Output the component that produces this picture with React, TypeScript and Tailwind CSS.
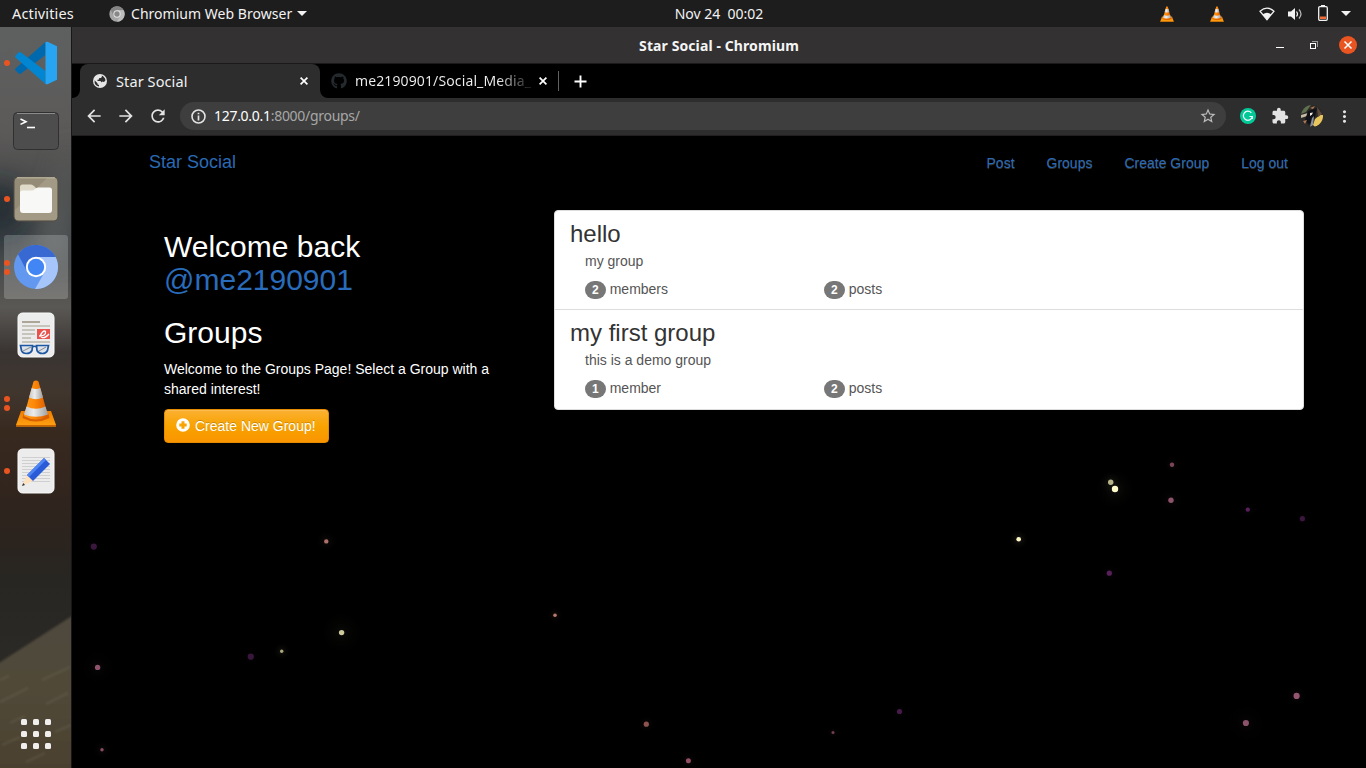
import { FaGithub } from "react-icons/fa";
import { MdExtension, MdArrowBack, MdArrowForward, MdRefresh, MdStarBorder, MdMoreVert } from "react-icons/md";
import type { ReactNode } from "react";

const UI = "font-['Noto_Sans','Open_Sans',sans-serif]";

function Cone({ w, h }: { w: number; h: number }) {
  return (
    <svg width={w} height={h} viewBox="0 0 42 47">
      <defs>
        <linearGradient id="coneO" x1="0" x2="1" y1="0" y2="0">
          <stop offset="0" stopColor="#ff9a1c" />
          <stop offset="0.4" stopColor="#ff8a0a" />
          <stop offset="1" stopColor="#d95a00" />
        </linearGradient>
        <linearGradient id="coneW" x1="0" x2="1" y1="0" y2="0">
          <stop offset="0" stopColor="#c4c4c4" />
          <stop offset="0.4" stopColor="#ececec" />
          <stop offset="1" stopColor="#a0a0a0" />
        </linearGradient>
        <linearGradient id="coneB" x1="0" x2="0" y1="0" y2="1">
          <stop offset="0" stopColor="#f07c00" />
          <stop offset="1" stopColor="#ffa313" />
        </linearGradient>
      </defs>
      <path d="M6 31H36L41 45Q41.500 46.500 40 46.500H2Q.5 46.500 1 45Z" fill="url(#coneB)" />
      <path d="M1 45H41V46.500H1Z" fill="#c96400" />
      <path d="M8.500 34Q21 41 33.500 34L34.500 38Q21 45 7.500 38Z" fill="#d75f00" />
      <path d="M18.500 1.500Q21 -.5 23.500 1.500L33 36Q21 43 9 36Z" fill="url(#coneO)" />
      <path d="M16.700 8Q21 10 25.300 8L28 17.500Q21 21 14 17.500Z" fill="url(#coneW)" />
      <path d="M11.500 26.500Q21 31 30.500 26.500L33 34.500Q21 39 9 34.500Z" fill="url(#coneW)" />
    </svg>
  );
}

function TopBar() {
  return (
    <header className={`flex h-[27px] shrink-0 items-center bg-[#1d1d1d] text-[14px] leading-[27px] text-[#f2f2f2] ${UI}`}>
      <div className="flex flex-1 items-center">
        <span className="ml-3 w-[97px] text-[14.5px] tracking-[0.15px]">Activities</span>
        <svg width="16" height="16" viewBox="0 0 48 48">
          <circle cx="24" cy="24" r="23" fill="#a5a5a5" />
          <path d="M24 13H44A23 23 0 0 0 5 11L14 29Z" fill="#858585" />
          <path d="M34 29L24 47A23 23 0 0 0 44 13H24Z" fill="#bcbcbc" />
          <circle cx="24" cy="24" r="11" fill="#e5e5e5" />
          <circle cx="24" cy="24" r="8" fill="#888" />
        </svg>
        <span className="ml-[6px] w-[162px] whitespace-nowrap tracking-[0.03px]">Chromium Web Browser</span>
        <svg className="ml-[4px]" width="10" height="5" viewBox="0 0 10 5"><path d="M0 0H10L5 5Z" fill="#f2f2f2" /></svg>
      </div>
      <span className="ml-[72px] -mt-px whitespace-pre tracking-[0px]">Nov 24  00:02</span>
      <div className="flex flex-1 items-center justify-end">
        <Cone w={14} h={16} />
        <span className="w-9" />
        <Cone w={14} h={16} />
        <svg className="ml-[35px]" width="16" height="14" viewBox="0 0 16 14">
          <path d="M1 4.200Q8-1.800 15 4.200L8 12.700Z" fill="none" stroke="#f2f2f2" strokeWidth="1.200" />
          <path d="M3.800 7.200Q8 4.200 12.200 7.200L8 12.700Z" fill="#f2f2f2" />
        </svg>
        <svg className="ml-[12px]" width="16" height="14" viewBox="0 0 16 14">
          <path d="M1 4.500H4L8 1V13L4 9.500H1Z" fill="#f2f2f2" />
          <path d="M9.500 4.500Q11.500 7 9.500 9.500" fill="none" stroke="#f2f2f2" strokeWidth="1.200" />
          <path d="M12 2.500Q16 7 12 11.500" fill="none" stroke="#bbb" strokeWidth="1.200" />
        </svg>
        <svg className="-mt-[2px] ml-[15px]" width="10" height="16" viewBox="0 0 10 16">
          <path d="M3 0H7V2H3Z" fill="#f2f2f2" />
          <rect x=".7" y="1.700" width="8.600" height="13.600" rx="1.200" fill="none" stroke="#f2f2f2" strokeWidth="1.300" />
          <path d="M2 11.500H8V14H2Z" fill="#f26a35" />
        </svg>
        <svg className="ml-[13px] mr-[15px]" width="10" height="5" viewBox="0 0 10 5"><path d="M0 0H10L5 5Z" fill="#f2f2f2" /></svg>
      </div>
    </header>
  );
}

function VsCode() {
  return (
    <svg width="44" height="44" viewBox="0 0 44 44">
      <path d="M31.500 1V14L7 32.500Q6 33.300 5 32.700L1.500 29.500Q.5 28.500 1.500 27.500Z" fill="#0069ad" />
      <path d="M31.500 43V30L7 11.500Q6 10.700 5 11.300L1.500 14.500Q.5 15.500 1.500 16.500Z" fill="#0286d1" />
      <path d="M31.500 1Q33 .6 34 1L43 5.200V38.800L34 43Q33 43.400 31.500 43Z" fill="#27a5f2" />
    </svg>
  );
}

function Terminal() {
  return (
    <svg width="46" height="38" viewBox="0 0 46 38">
      <rect x=".5" y=".5" width="45" height="37" rx="4" fill="#4d4d4d" stroke="#303030" />
      <path d="M4 1.500H42" stroke="#8b8b8b" />
      <path d="M7.500 7L13 9.700L7.500 12.400" fill="none" stroke="#fff" strokeWidth="1.600" />
      <path d="M14 15.500H22" stroke="#fff" strokeWidth="1.600" />
    </svg>
  );
}

function Files() {
  return (
    <svg width="46" height="46" viewBox="0 0 46 46">
      <rect x="1" y="1" width="44" height="44" rx="4.500" fill="#958c77" stroke="#544f45" />
      <path d="M2 34L34 2H41Q44 2 44 5V41Q44 44 41 44H5Q2 44 2 41Z" fill="#a39a85" />
      <path d="M4 1.800H42" stroke="#c8c0ac" />
      <path d="M7 16V11Q7 8.500 9.500 8.500H18Q19.500 8.500 21 10L23 12H35V20H7Z" fill="#dfdac9" />
      <path d="M7 17Q7 14.500 9.500 14.500H19Q20.500 14.500 22 13Q23.500 11.500 25 11.500H36.500Q39 11.500 39 14V34Q39 37 36 37H10Q7 37 7 34Z" fill="#f8f8f7" />
    </svg>
  );
}

function Chromium() {
  return (
    <svg width="44" height="44" viewBox="0 0 44 44">
      <circle cx="22" cy="22" r="22" fill="#6298ef" />
      <path d="M22 12H41.600A22 22 0 0 0 4 9.300L13.300 27Z" fill="#3869d3" />
      <path d="M41.600 12A22 22 0 0 1 21 44L30.700 27L31 17L22 12Z" fill="#a6c5fb" />
      <circle cx="22" cy="22" r="10.200" fill="#fff" />
      <circle cx="22" cy="22" r="8.200" fill="#4285f4" />
    </svg>
  );
}

function Reader() {
  return (
    <svg width="38" height="46" viewBox="0 0 38 46">
      <rect x="1" y="1" width="36" height="44" rx="4.500" fill="#ececec" stroke="#fafafa" />
      <g stroke="#bbb6ac" strokeWidth="1.700">
        <path d="M5 10H23" stroke="#a1998a" />
        <path d="M5 14H33M5 18H18M5 22H18M5 26H14M5 30H33" />
      </g>
      <rect x="20" y="17" width="13" height="10" fill="#e9534e" />
      <path d="M22 24Q29 24 28.500 20Q28 18 25.500 20Q22 24 25 25.500Q28 26.500 32 22" fill="none" stroke="#fff" strokeWidth="1.300" />
      <path d="M3.500 33.500H15.500L15 38.500Q13.500 41.500 9.500 41.500Q5.500 41.500 4.500 38.500ZM19.500 33.500H31.500L30.500 38.500Q29 41.500 25.500 41.500Q21.500 41.500 20 38.500ZM15.500 35Q17.500 33.500 19.500 35" fill="#dbe2ec" stroke="#1d57a2" strokeWidth="1.700" />
      <path d="M6 39L14 35M22 39L29 35" stroke="#888" />
    </svg>
  );
}

function Editor() {
  return (
    <svg width="38" height="46" viewBox="0 0 38 46">
      <rect x="1" y="1" width="36" height="44" rx="4.500" fill="#ececec" stroke="#fafafa" />
      <path d="M5 9.500H33M5 12.500H33M5 15.500H33M5 18.500H33M5 21.500H33M5 24.500H33M5 27.500H33M5 30.500H33M5 33.500H33" stroke="#cfcfcf" />
      <path d="M5 38L10 27L16 33Z" fill="#ffe1bd" />
      <path d="M5 38L6.200 35L8 37Z" fill="#333" />
      <path d="M10 27L27 10L33 16L16 33Z" fill="#2a5cd7" />
      <path d="M10 27L27 10L29 12L12 29Z" fill="#4f84f4" />
    </svg>
  );
}

function DockItem({ dots = 0, active, children }: { dots?: number; active?: boolean; children: ReactNode }) {
  return (
    <div className={`relative flex h-16 w-16 items-center justify-center rounded-[3px] ${active ? "bg-white/20" : ""}`}>
      {children}
      <div className="absolute left-0 top-0 flex h-16 flex-col items-center justify-center gap-[3px]">
        {Array.from({ length: dots }, (_, i) => <i key={i} className="block h-[6px] w-[6px] rounded-full bg-[#e95420]" />)}
      </div>
    </div>
  );
}

function Dock() {
  return (
    <aside className="relative flex w-[72px] shrink-0 flex-col border-r border-[#171717] bg-[linear-gradient(180deg,#5e6060_0px,#5c5a59_105px,#474949_165px,#3a4145_210px,#5a5854_280px,#393432_325px,#40362e_365px,#38291f_405px,#33261e_450px,#2b231e_510px,#282622_550px,#302e2a_741px)]">
      <svg className="absolute inset-0" width="71" height="741" viewBox="0 0 71 741">
        <defs>
          <linearGradient id="desk" x1="0" y1="0" x2="0" y2="1">
            <stop offset="0" stopColor="#504a3e" />
            <stop offset=".5" stopColor="#514838" />
            <stop offset="1" stopColor="#4a412f" />
          </linearGradient>
          <filter id="soft" x="-50%" y="-50%" width="200%" height="200%"><feGaussianBlur stdDeviation="12" /></filter>
          <filter id="edge"><feGaussianBlur stdDeviation="1" /></filter>
        </defs>
        <path d="M71 110V230H30Z" fill="#5f605f" opacity=".8" filter="url(#soft)" />
        <ellipse cx="0" cy="180" rx="22" ry="26" fill="#18242b" opacity=".7" filter="url(#soft)" />
        <path d="M-4 638L75 587V745H-4Z" fill="url(#desk)" filter="url(#edge)" />
        <path d="M0 675L28 661M42 653L70 640M10 696L25 689M46 677L68 666M2 718L20 710M55 705L71 698M0 653L9 649M26 735L45 726" stroke="#77715f" strokeWidth="2" opacity=".3" filter="url(#edge)" />
      </svg>
      <nav className="relative ml-1 mt-1 flex flex-col gap-1">
        <DockItem dots={1}><VsCode /></DockItem>
        <DockItem><Terminal /></DockItem>
        <DockItem dots={1}><Files /></DockItem>
        <DockItem dots={2} active><Chromium /></DockItem>
        <DockItem><Reader /></DockItem>
        <DockItem dots={2}><Cone w={42} h={47} /></DockItem>
        <DockItem dots={1}><Editor /></DockItem>
      </nav>
      <div className="relative mx-auto mb-[19px] mt-auto grid grid-cols-3 gap-[6px]">
        {Array.from({ length: 9 }, (_, i) => <i key={i} className="block h-[6px] w-[6px] rounded-[1.5px] bg-[#f0efee]" />)}
      </div>
    </aside>
  );
}

function TitleBar() {
  return (
    <div className={`flex h-[37px] shrink-0 items-center border-b border-[#1b1a1b] bg-[#343132] text-[#f5f5f5] ${UI}`}>
      <div className="flex-1" />
      <span className="text-[14px] font-bold tracking-[0.1px]">Star Social - Chromium</span>
      <div className="flex flex-1 items-center justify-end">
        <i className="mr-[26px] mt-[5px] block h-px w-2 bg-white" />
        <svg className="mr-[21px]" width="8" height="8" viewBox="0 0 8 8" shapeRendering="crispEdges">
          <rect x=".5" y="2.500" width="5" height="5" fill="none" stroke="#fff" />
          <path d="M2 .5H7.500V6" fill="none" stroke="#999" />
        </svg>
        <svg className="mr-[9px]" width="18" height="18" viewBox="0 0 18 18">
          <circle cx="9" cy="9" r="9" fill="#e95420" />
          <path d="M5.500 5.500L12.500 12.500M12.500 5.500L5.500 12.500" stroke="#fff" strokeWidth="1.500" />
        </svg>
      </div>
    </div>
  );
}

function TabClose() {
  return (
    <svg className="mr-[12px] shrink-0" width="8" height="8" viewBox="0 0 8 8">
      <path d="M.6 .6L7.400 7.400M7.400 .6L.6 7.400" stroke="#fff" strokeWidth="1.700" />
    </svg>
  );
}

function Tabs() {
  return (
    <div className={`flex h-[34px] shrink-0 bg-black text-[14px] leading-[34px] text-[#f1f1f1] ${UI}`}>
      <div className="flex w-2 items-end bg-[#2d2d2d]"><div className="h-full w-2 rounded-br-[8px] bg-black" /></div>
      <div className="flex bg-[linear-gradient(180deg,#000_50%,#2d2d2d_50%)]">
        <div className="flex w-[240px] items-center rounded-t-[8px] bg-[#2d2d2d] pl-[13px]">
          <svg width="14" height="14" viewBox="0 0 14 14">
            <circle cx="7" cy="7" r="7" fill="#e6e6e6" />
            <path d="M8.500 1.600L9 2.500L8 4H6.200L6 5.500L4.500 5.800V7H7.500L8.500 8.500L9 7.500L11 8L12.500 6.300Q12 3 8.500 1.600ZM1.600 6.200L4.500 9.200V10.200L6 11V12.500Q1 11.500 1.600 6.200Z" fill="#2d2d2d" />
          </svg>
          <span className="ml-[9px] flex-1 text-[14.5px] tracking-[0.1px]">Star Social</span>
          <TabClose />
        </div>
      </div>
      <div className="w-2 bg-[#2d2d2d]"><div className="h-full rounded-bl-[8px] bg-black" /></div>
      <div className="flex w-[231px] items-center bg-black pl-[3px]">
        <FaGithub size={16} color="#24292e" />
        <span className="ml-[8px] w-[184px] whitespace-nowrap bg-[linear-gradient(90deg,#f1f1f1_143px,#222_173px)] bg-clip-text tracking-[0.12px] text-transparent">me2190901/Social_Media_</span>
        <TabClose />
      </div>
      <i className="-ml-px block h-5 w-px self-center bg-[#606060]" />
      <svg className="ml-[15px] self-center" width="13" height="13" viewBox="0 0 13 13">
        <path d="M6.500 .5V12.500M.5 6.500H12.500" stroke="#fff" strokeWidth="1.900" />
      </svg>
    </div>
  );
}

function Toolbar() {
  return (
    <div className={`flex h-[38px] shrink-0 items-center border-b border-[#201e1f] bg-[#2d2d2d] text-[#e3e3e3] ${UI}`}>
      <MdArrowBack size={20} className="-mt-px ml-3" />
      <MdArrowForward size={20} className="-mt-px ml-3" />
      <MdRefresh size={20} className="-mt-px ml-3" />
      <div className="-mt-px ml-[12px] flex h-7 w-[1046px] items-center rounded-full bg-[#3e3e3e]">
        <svg className="ml-[11px]" width="15" height="15" viewBox="0 0 15 15">
          <circle cx="7.500" cy="7.500" r="6.500" fill="none" stroke="#e3e3e3" strokeWidth="1.600" />
          <path d="M7.500 6.500V11.500M7.500 3.700V5.300" stroke="#e3e3e3" strokeWidth="1.700" />
        </svg>
        <span className="-mt-px ml-[8px] flex-1 text-[14px] tracking-[-0.29px] text-[#a7a7a7]"><span className="text-white">127.0.0.1</span>:8000/groups/</span>
        <MdStarBorder size={18} color="#bcbcbc" className="mr-[9px]" />
      </div>
      <svg className="-mt-px ml-[14px]" width="16" height="16" viewBox="0 0 16 16">
        <circle cx="8" cy="8" r="8" fill="#03c998" />
        <path d="M11.300 4.800A4.500 4.500 0 1 0 12.300 8.500H9.500M12.300 8.500V11" fill="none" stroke="#fff" strokeWidth="1.200" />
      </svg>
      <MdExtension size={18} className="-mt-px ml-[15px]" />
      <svg className="-mt-px ml-[12px]" width="22" height="22" viewBox="0 0 22 22">
        <defs><clipPath id="face"><circle cx="11" cy="11" r="11" /></clipPath></defs>
        <g clipPath="url(#face)">
          <rect width="22" height="22" fill="#2c2926" />
          <path d="M0 0H10L5 7L0 9Z" fill="#5f704e" />
          <path d="M0 10L7 8L6 11L0 13Z" fill="#c8bea6" />
          <path d="M7 6L16 3L14 12L8 20L4 15Z" fill="#111217" />
          <path d="M9 8L12 7.500L11 9.500L9 11Z" fill="#f2e9e1" />
          <path d="M14 14L19 10H22V18L14 22L12 20Z" fill="#e8c65d" />
          <path d="M16 2L21 9L17 12Z" fill="#5f4a40" />
          <path d="M9 3L14 1L12 4ZM2 16L6 15L4 19Z" fill="#aa7957" />
          <path d="M11 13L13 11L12 20L9 22Z" fill="#8792a0" />
        </g>
      </svg>
      <MdMoreVert size={19} className="-mt-px ml-[12px]" />
    </div>
  );
}

const STARS: [number, number, number, string, number][] = [
  [1172, 464.700, 2.200, "#7a4657", 7], [1110.700, 482.300, 2.700, "#b5b28a", 10], [1115, 489, 3.200, "#fffbcb", 19],
  [1171, 500.200, 2.700, "#8c536b", 12], [1247.800, 509.700, 2.100, "#59205c", 8], [1302.400, 518.700, 2.600, "#3b163e", 8],
  [1018.700, 539.300, 2.300, "#fff7c6", 9], [1109.300, 573.200, 2.600, "#562059", 10], [1296.600, 695.900, 3.100, "#925670", 10],
  [1245.900, 723, 3.100, "#8c5269", 20], [93.800, 546.600, 3.100, "#3a183e", 12], [326.300, 541.400, 2.200, "#ae706a", 10],
  [341.600, 632.600, 2.700, "#cdca9e", 20], [281.700, 651.300, 1.700, "#aaa77e", 8], [250.800, 656.700, 3.100, "#39163c", 12],
  [97.600, 667.400, 2.700, "#8d536a", 17], [102, 749.700, 1.700, "#844e63", 9], [555, 615.200, 1.800, "#b8796e", 7],
  [899.500, 711.500, 2.600, "#461a49", 8], [646.300, 724.200, 2.600, "#8c5350", 8], [833, 732.500, 1.500, "#713f4c", 5],
  [688.400, 760.700, 2.500, "#925062", 8],
];

function Sky() {
  return (
    <svg className="absolute inset-0" width="1294" height="632" viewBox="72 136 1294 632">
      <defs>
        {STARS.map((s, i) => (
          <radialGradient key={i} id={`g${i}`}>
            <stop offset="0" stopColor={s[3]} stopOpacity={Math.min(0.16, 1 / s[4])} />
            <stop offset=".5" stopColor={s[3]} stopOpacity={Math.min(0.05, 0.3 / s[4])} />
            <stop offset="1" stopColor={s[3]} stopOpacity="0" />
          </radialGradient>
        ))}
      </defs>
      {STARS.map(([x, y, r, c, g], i) => (
        <g key={i}>
          <circle cx={x} cy={y} r={g} fill={`url(#g${i})`} />
          <circle cx={x} cy={y} r={r} fill={c} />
        </g>
      ))}
    </svg>
  );
}

function Count({ n, label }: { n: number; label: string }) {
  return (
    <div className="w-[239px]">
      <span className="mr-1 inline-block min-w-[10px] rounded-[10px] bg-[#777] px-[7px] py-[3px] text-center align-middle text-[12px] font-bold leading-[12px] text-white">{n}</span>
      <span>{label}</span>
    </div>
  );
}

function Group({ name, about, members, label }: { name: string; about: string; members: number; label: string }) {
  return (
    <div className="px-[15px] pb-[10px] pt-[10px] text-[14px] leading-5 text-[#555]">
      <h3 className="text-[24px] leading-[26px] text-[#333]">{name}</h3>
      <div className="pl-[15px] pt-[4px]">
        <p>{about}</p>
        <div className="mt-[8px] flex h-5">
          <Count n={members} label={label} />
          <Count n={2} label="posts" />
        </div>
      </div>
    </div>
  );
}

function Page() {
  return (
    <main className="relative flex-1 overflow-hidden bg-black font-['Liberation_Sans',Arial,sans-serif] text-[14px] leading-5 text-white">
      <Sky />
      <div className="relative mx-auto w-[1170px]">
        <nav className="flex h-[52px] items-center justify-between px-[15px] text-[#2a6ab4] [text-shadow:0_1px_0_rgba(255,255,255,0.2)]">
          <a className="text-[18px] [text-shadow:none]">Star Social</a>
          <div className="flex gap-8 pr-px pt-[2px]">
            <a>Post</a><a>Groups</a><a>Create Group</a><a>Log out</a>
          </div>
        </nav>
        <div className="flex pt-[22px]">
          <section className="w-[420px] pl-[30px] pt-5">
            <h2 className="text-[30px] leading-[33px]">Welcome back<br /><a className="text-[#296cbb]">@me2190901</a></h2>
            <h2 className="mt-5 text-[30px] leading-[33px]">Groups</h2>
            <p className="mt-[10px] w-[345px]">Welcome to the Groups Page! Select a Group with a shared interest!</p>
            <a className="mt-[10px] inline-flex h-[34px] w-[165px] items-center rounded-[4px] border border-[#e68a00] bg-[linear-gradient(180deg,#fbb033_0%,#f8a300_50%,#fa9500_100%)] pl-[12px] shadow-[inset_0_1px_0_rgba(255,255,255,0.15)] [text-shadow:0_-1px_0_rgba(0,0,0,0.2)]">
              <svg className="-ml-px -mt-[2px] mr-[5px]" width="14" height="14" viewBox="0 0 14 14">
                <path fillRule="evenodd" d="M7 .2A6.800 6.800 0 1 0 7 13.800A6.800 6.800 0 1 0 7 .2ZM5.500 3.300H8.500V5.500H10.700V8.500H8.500V10.700H5.500V8.500H3.300V5.500H5.500Z" fill="#fff" />
              </svg>
              Create New Group!
            </a>
          </section>
          <section className="h-[200px] w-[750px] divide-y divide-[#ddd] rounded-[4px] border border-[#ddd] bg-white">
            <Group name="hello" about="my group" members={2} label="members" />
            <Group name="my first group" about="this is a demo group" members={1} label="member" />
          </section>
        </div>
      </div>
    </main>
  );
}

export default function App() {
  return (
    <div className="flex h-[768px] w-[1366px] flex-col overflow-hidden bg-black">
      <TopBar />
      <div className="flex min-h-0 flex-1">
        <Dock />
        <div className="flex min-w-0 flex-1 flex-col">
          <TitleBar />
          <Tabs />
          <Toolbar />
          <Page />
        </div>
      </div>
    </div>
  );
}
